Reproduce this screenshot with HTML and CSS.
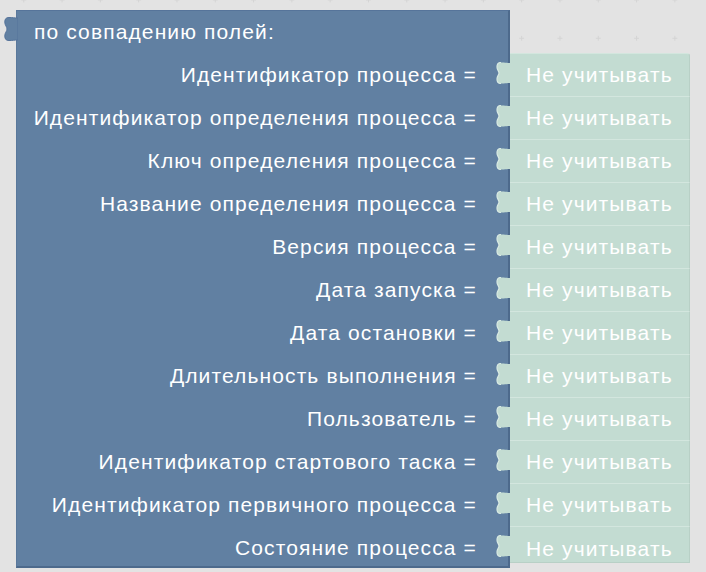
FILE: index.html
```html
<!DOCTYPE html>
<html lang="ru">
<head>
<meta charset="utf-8">
<title>Фильтр процессов</title>
<link rel="stylesheet" href="styles.css">
</head>
<body>
<div class="workspace">
  <svg class="grid" width="706" height="572" aria-hidden="true">
    <defs>
      <pattern id="dots" x="21.3" y="-2.5" width="38.3" height="38.3" patternUnits="userSpaceOnUse">
        <path d="M0 2.5h5M2.5 0v5" stroke="#d4d4d4" stroke-width="1"/>
      </pattern>
    </defs>
    <rect width="706" height="572" fill="url(#dots)"/>
  </svg>

  <div class="block">
    <svg class="out-tab" width="14" height="24" viewBox="0 0 14 24" aria-hidden="true">
      <path d="M14 1 C10 1 9 0.5 5 0.5 C2 0.5 0.8 2 0.8 5 C0.8 8.5 3 9.5 3 12 C3 14.5 0.8 15.5 0.8 19 C0.8 22 2 23.5 5 23.5 C9 23.5 10 23 14 23 Z" fill="#6180a2" stroke="#55739a" stroke-width="1"/>
    </svg>
    <div class="head">по совпадению полей:</div>
    <div class="rows">
      <div class="row"><div class="label">Идентификатор процесса =</div><div class="value"><svg class="tab" width="15" height="22" viewBox="0 0 15 22"><path d="M15 1 C11 1 10 0.5 5 0.5 C2 0.5 1 2 1 5 C1 8 3 9 3 11 C3 13 1 14 1 17 C1 20 2 21.5 5 21.5 C10 21.5 11 21 15 21 Z"/><path class="hl" d="M5 0.5 C2 0.5 1 2 1 5 C1 8 3 9 3 11 C3 13 1 14 1 17 C1 20 2 21.5 5 21.5"/></svg>Не учитывать</div></div>
      <div class="row"><div class="label">Идентификатор определения процесса =</div><div class="value"><svg class="tab" width="15" height="22" viewBox="0 0 15 22"><path d="M15 1 C11 1 10 0.5 5 0.5 C2 0.5 1 2 1 5 C1 8 3 9 3 11 C3 13 1 14 1 17 C1 20 2 21.5 5 21.5 C10 21.5 11 21 15 21 Z"/><path class="hl" d="M5 0.5 C2 0.5 1 2 1 5 C1 8 3 9 3 11 C3 13 1 14 1 17 C1 20 2 21.5 5 21.5"/></svg>Не учитывать</div></div>
      <div class="row"><div class="label">Ключ определения процесса =</div><div class="value"><svg class="tab" width="15" height="22" viewBox="0 0 15 22"><path d="M15 1 C11 1 10 0.5 5 0.5 C2 0.5 1 2 1 5 C1 8 3 9 3 11 C3 13 1 14 1 17 C1 20 2 21.5 5 21.5 C10 21.5 11 21 15 21 Z"/><path class="hl" d="M5 0.5 C2 0.5 1 2 1 5 C1 8 3 9 3 11 C3 13 1 14 1 17 C1 20 2 21.5 5 21.5"/></svg>Не учитывать</div></div>
      <div class="row"><div class="label">Название определения процесса =</div><div class="value"><svg class="tab" width="15" height="22" viewBox="0 0 15 22"><path d="M15 1 C11 1 10 0.5 5 0.5 C2 0.5 1 2 1 5 C1 8 3 9 3 11 C3 13 1 14 1 17 C1 20 2 21.5 5 21.5 C10 21.5 11 21 15 21 Z"/><path class="hl" d="M5 0.5 C2 0.5 1 2 1 5 C1 8 3 9 3 11 C3 13 1 14 1 17 C1 20 2 21.5 5 21.5"/></svg>Не учитывать</div></div>
      <div class="row"><div class="label">Версия процесса =</div><div class="value"><svg class="tab" width="15" height="22" viewBox="0 0 15 22"><path d="M15 1 C11 1 10 0.5 5 0.5 C2 0.5 1 2 1 5 C1 8 3 9 3 11 C3 13 1 14 1 17 C1 20 2 21.5 5 21.5 C10 21.5 11 21 15 21 Z"/><path class="hl" d="M5 0.5 C2 0.5 1 2 1 5 C1 8 3 9 3 11 C3 13 1 14 1 17 C1 20 2 21.5 5 21.5"/></svg>Не учитывать</div></div>
      <div class="row"><div class="label">Дата запуска =</div><div class="value"><svg class="tab" width="15" height="22" viewBox="0 0 15 22"><path d="M15 1 C11 1 10 0.5 5 0.5 C2 0.5 1 2 1 5 C1 8 3 9 3 11 C3 13 1 14 1 17 C1 20 2 21.5 5 21.5 C10 21.5 11 21 15 21 Z"/><path class="hl" d="M5 0.5 C2 0.5 1 2 1 5 C1 8 3 9 3 11 C3 13 1 14 1 17 C1 20 2 21.5 5 21.5"/></svg>Не учитывать</div></div>
      <div class="row"><div class="label">Дата остановки =</div><div class="value"><svg class="tab" width="15" height="22" viewBox="0 0 15 22"><path d="M15 1 C11 1 10 0.5 5 0.5 C2 0.5 1 2 1 5 C1 8 3 9 3 11 C3 13 1 14 1 17 C1 20 2 21.5 5 21.5 C10 21.5 11 21 15 21 Z"/><path class="hl" d="M5 0.5 C2 0.5 1 2 1 5 C1 8 3 9 3 11 C3 13 1 14 1 17 C1 20 2 21.5 5 21.5"/></svg>Не учитывать</div></div>
      <div class="row"><div class="label">Длительность выполнения =</div><div class="value"><svg class="tab" width="15" height="22" viewBox="0 0 15 22"><path d="M15 1 C11 1 10 0.5 5 0.5 C2 0.5 1 2 1 5 C1 8 3 9 3 11 C3 13 1 14 1 17 C1 20 2 21.5 5 21.5 C10 21.5 11 21 15 21 Z"/><path class="hl" d="M5 0.5 C2 0.5 1 2 1 5 C1 8 3 9 3 11 C3 13 1 14 1 17 C1 20 2 21.5 5 21.5"/></svg>Не учитывать</div></div>
      <div class="row"><div class="label">Пользователь =</div><div class="value"><svg class="tab" width="15" height="22" viewBox="0 0 15 22"><path d="M15 1 C11 1 10 0.5 5 0.5 C2 0.5 1 2 1 5 C1 8 3 9 3 11 C3 13 1 14 1 17 C1 20 2 21.5 5 21.5 C10 21.5 11 21 15 21 Z"/><path class="hl" d="M5 0.5 C2 0.5 1 2 1 5 C1 8 3 9 3 11 C3 13 1 14 1 17 C1 20 2 21.5 5 21.5"/></svg>Не учитывать</div></div>
      <div class="row"><div class="label">Идентификатор стартового таска =</div><div class="value"><svg class="tab" width="15" height="22" viewBox="0 0 15 22"><path d="M15 1 C11 1 10 0.5 5 0.5 C2 0.5 1 2 1 5 C1 8 3 9 3 11 C3 13 1 14 1 17 C1 20 2 21.5 5 21.5 C10 21.5 11 21 15 21 Z"/><path class="hl" d="M5 0.5 C2 0.5 1 2 1 5 C1 8 3 9 3 11 C3 13 1 14 1 17 C1 20 2 21.5 5 21.5"/></svg>Не учитывать</div></div>
      <div class="row"><div class="label">Идентификатор первичного процесса =</div><div class="value"><svg class="tab" width="15" height="22" viewBox="0 0 15 22"><path d="M15 1 C11 1 10 0.5 5 0.5 C2 0.5 1 2 1 5 C1 8 3 9 3 11 C3 13 1 14 1 17 C1 20 2 21.5 5 21.5 C10 21.5 11 21 15 21 Z"/><path class="hl" d="M5 0.5 C2 0.5 1 2 1 5 C1 8 3 9 3 11 C3 13 1 14 1 17 C1 20 2 21.5 5 21.5"/></svg>Не учитывать</div></div>
      <div class="row last"><div class="label">Состояние процесса =</div><div class="value"><svg class="tab" width="15" height="22" viewBox="0 0 15 22"><path d="M15 1 C11 1 10 0.5 5 0.5 C2 0.5 1 2 1 5 C1 8 3 9 3 11 C3 13 1 14 1 17 C1 20 2 21.5 5 21.5 C10 21.5 11 21 15 21 Z"/><path class="hl" d="M5 0.5 C2 0.5 1 2 1 5 C1 8 3 9 3 11 C3 13 1 14 1 17 C1 20 2 21.5 5 21.5"/></svg>Не учитывать</div></div>
    </div>
  </div>
</div>
</body>
</html>
```

FILE: styles.css
```css
html, body {
  margin: 0;
  padding: 0;
}

body {
  width: 706px;
  height: 572px;
  overflow: hidden;
  background: #e3e3e3;
  font-family: "Liberation Sans", Arial, sans-serif;
  color: #ffffff;
}

.workspace {
  position: relative;
  width: 706px;
  height: 572px;
  padding: 10px 0 0 16px;
  box-sizing: border-box;
}

.grid {
  position: absolute;
  left: 0;
  top: 0;
}

/* main statement block */
.block {
  position: relative;
  width: 674px;
  display: flex;
  flex-direction: column;
  font-size: 21px;
  letter-spacing: 1.12px;
}

.out-tab {
  position: absolute;
  left: -12px;
  top: 7px;
}

.head {
  width: 494px;
  height: 43px;
  box-sizing: border-box;
  padding: 0 0 0 17px;
  display: flex;
  align-items: center;
  background: #6180a2;
  border-top: 1px solid #56749a;
  border-right: 2px solid #4d6a8c;
  border-left: 1px solid #5a789b;
}

.rows {
  display: flex;
  flex-direction: column;
}

.row {
  display: grid;
  grid-template-columns: 494px 180px;
  height: 43px;
}

.label {
  background: #6180a2;
  border-right: 2px solid #4d6a8c;
  border-left: 1px solid #5a789b;
  box-sizing: border-box;
  padding-right: 31px;
  display: flex;
  align-items: center;
  justify-content: flex-end;
  white-space: nowrap;
}

.row.last .label {
  height: 42px;
  padding-top: 4px;
  border-bottom: 2px solid #4d6a8c;
}

/* connected value block with its output tab */
.value {
  position: relative;
  background: #c3dcd2;
  border-top: 1px solid #d3e6de;
  border-right: 1px solid #b8d0c6;
  box-sizing: border-box;
  padding-left: 16px;
  display: flex;
  align-items: center;
  white-space: nowrap;
}

.row:first-child .value {
  border-top-right-radius: 3px;
}

.row.last .value {
  height: 37px;
  align-self: start;
  padding-top: 8px;
  border-bottom: 1px solid #b8d0c6;
}

.tab {
  position: absolute;
  left: -14px;
  top: 8px;
}

.tab path {
  fill: #c3dcd2;
}

.tab path.hl {
  fill: none;
  stroke: #d9eae3;
  stroke-width: 1.2;
}
```
